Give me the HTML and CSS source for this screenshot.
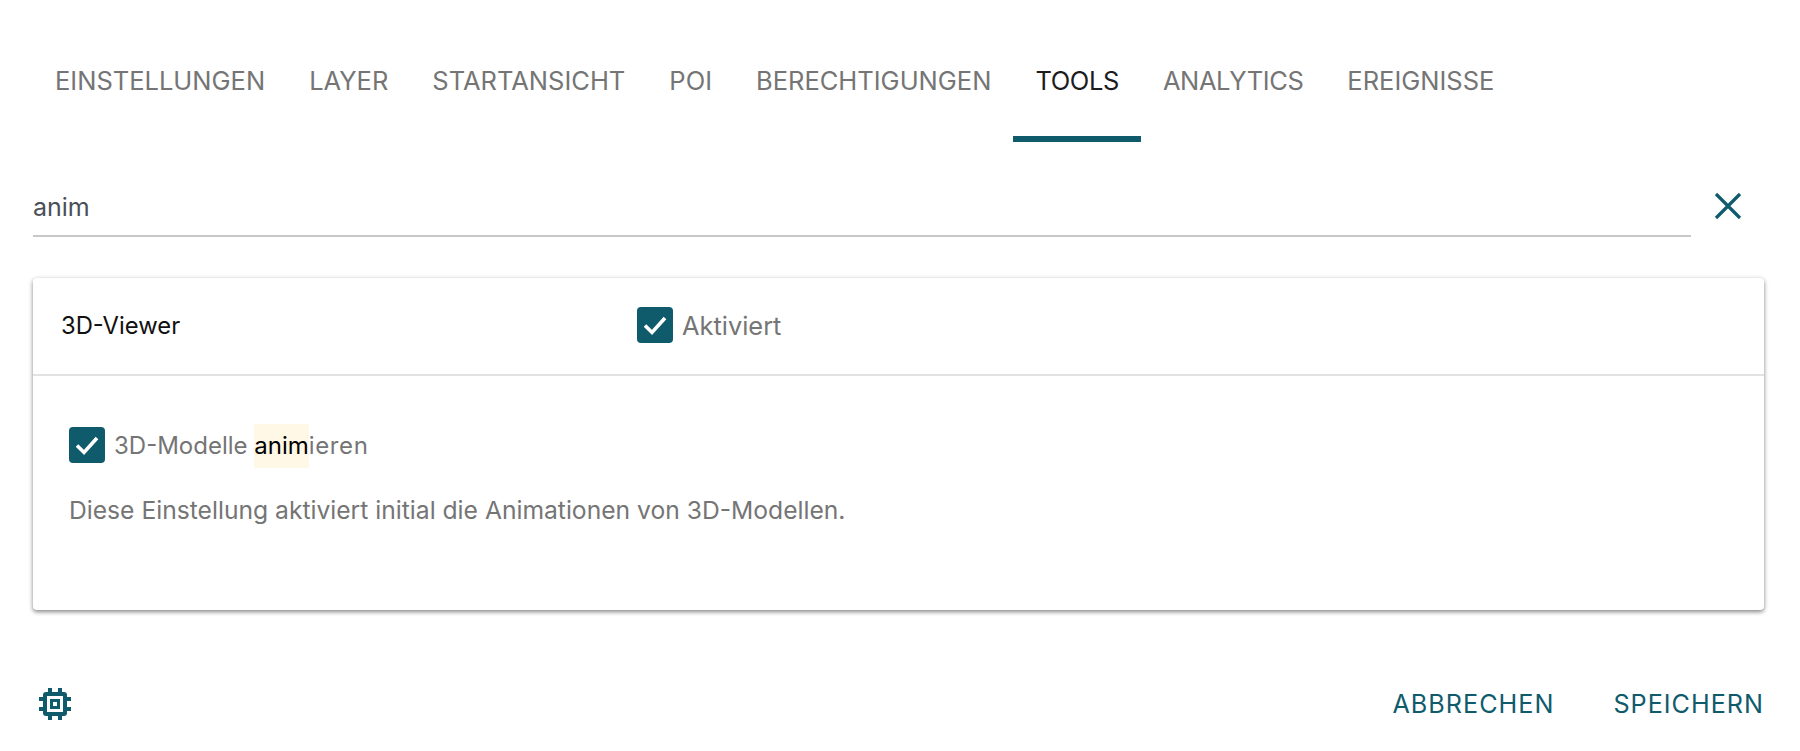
FILE: index.html
```html
<!DOCTYPE html>
<html lang="de">
<head>
<meta charset="utf-8">
<title>Tools</title>
<link rel="stylesheet" href="styles.css">
</head>
<body>
<div class="page">
  <nav class="tabs">
    <a class="tab">EINSTELLUNGEN</a>
    <a class="tab">LAYER</a>
    <a class="tab">STARTANSICHT</a>
    <a class="tab">POI</a>
    <a class="tab">BERECHTIGUNGEN</a>
    <a class="tab tab-active tab-tight">TOOLS</a>
    <a class="tab tab-tight">ANALYTICS</a>
    <a class="tab">EREIGNISSE</a>
  </nav>
  <div class="search">
    <div class="search-field">anim</div>
    <svg class="close" viewBox="0 0 28 28" width="28" height="28"><path d="M2 2L26 26M26 2L2 26"/></svg>
  </div>
  <section class="card">
    <header class="card-head">
      <div class="card-title">3D-Viewer</div>
      <label class="check">
        <span class="box"><svg viewBox="0 0 36 36" width="36" height="36"><path d="M8 18.5L15 25.5L28 11"/></svg></span>
        <span class="check-label check-label-wide">Aktiviert</span>
      </label>
    </header>
    <div class="card-body">
      <label class="check">
        <span class="box"><svg viewBox="0 0 36 36" width="36" height="36"><path d="M8 18.5L15 25.5L28 11"/></svg></span>
        <span class="check-label">3D-Modelle <mark class="hit">anim</mark><span class="rest">ieren</span></span>
      </label>
      <p class="hint">Diese Einstellung aktiviert initial die Animationen von 3D-Modellen.</p>
    </div>
  </section>
  <footer class="foot">
    <svg class="chip" viewBox="0 0 34 34" width="34" height="34">
      <path class="chip-fill" fill-rule="evenodd" d="M10 1h4v4h6V1h4v4h2a3 3 0 0 1 3 3v2h4v4h-4v6h4v4h-4v2a3 3 0 0 1-3 3h-2v4h-4v-4h-6v4h-4v-4H8a3 3 0 0 1-3-3v-2H1v-4h4v-6H1v-4h4V8a3 3 0 0 1 3-3h2zM9 9v16h16V9zM12 12h10v10H12zM15 15v4h4v-4z"/>
    </svg>
    <div class="actions">
      <button class="btn">ABBRECHEN</button>
      <button class="btn">SPEICHERN</button>
    </div>
  </footer>
</div>
</body>
</html>
```
FILE: styles.css
```css
html, body { margin: 0; padding: 0; background: #fff; }
body { font-family: Inter, "Liberation Sans", sans-serif; color: #737373; }
.page { display: flex; flex-direction: column; padding: 0 36px 0 33px; }
.tabs { display: flex; height: 142px; padding-top: 49px; box-sizing: border-box; }
.tab { display: flex; align-items: center; height: 62px; padding: 0 22px; font-size: 25.5px; color: #757575; position: relative; }
.tab-tight { letter-spacing: -.4px; }
.tab-active { color: #1c1c1c; }
.tab-active::after { content: ""; position: absolute; left: 0; right: 0; bottom: -31px; height: 6px; background: #0f5b6c; }
.search { display: flex; align-items: center; margin-top: 38px; height: 57px; }
.search-field { flex: 1; height: 57px; line-height: 55px; box-sizing: border-box; border-bottom: 2px solid #c8c8c8; font-size: 25px; color: #4a4f57; }
.close { margin: -6px 22px 0 23px; flex: none; }
.close path { stroke: #0f5b6c; stroke-width: 3.2; fill: none; }
.card { margin-top: 41px; height: 332px; background: #fff; border-radius: 4px; box-shadow: 0 2px 4px rgba(0,0,0,.45), 0 0 6px rgba(0,0,0,.06); display: flex; flex-direction: column; }
.card-head { display: flex; align-items: center; height: 98px; box-sizing: border-box; border-bottom: 2px solid #e2e2e2; padding: 0 0 2px 28px; }
.card-title { width: 576px; font-size: 23.8px; color: #111; }
.check { display: flex; align-items: center; gap: 9px; }
.box { width: 36px; height: 36px; border-radius: 4px; background: #0f5b6c; display: block; flex: none; }
.box svg { display: block; }
.box path { stroke: #fff; stroke-width: 3.6; fill: none; }
.check-label { font-size: 24px; color: #757575; padding-top: 2px; }
.check-label-wide { font-size: 25.4px; padding-top: 0; }
.rest { letter-spacing: .6px; }
.hit { display: inline-block; background: #fff8e6; color: #000; line-height: 44px; }
.card-body { padding: 46px 36px 0; }
.hint { margin: 26px 0 0; font-size: 24.65px; color: #757575; line-height: 32px; }
.foot { display: flex; justify-content: space-between; align-items: center; margin-top: 60px; height: 68px; }
.chip { flex: none; margin-left: 5px; }
.chip-fill { fill: #0f5b6c; }
.actions { display: flex; gap: 59px; }
.btn { border: 0; background: none; padding: 0; font: inherit; font-size: 25.2px; letter-spacing: 1px; color: #0f5b6c; }
```
